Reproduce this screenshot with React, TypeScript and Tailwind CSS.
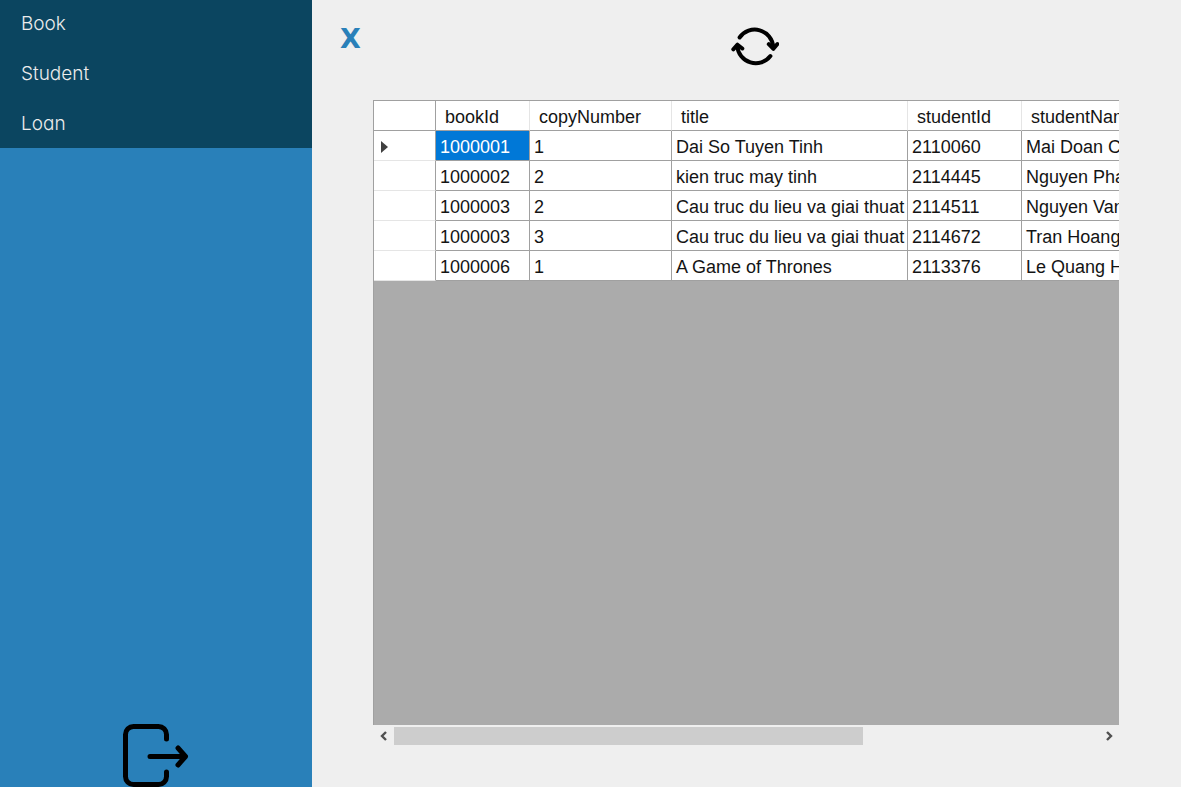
import React from 'react';

type Loan = {
  bookId: string;
  copyNumber: string;
  title: string;
  studentId: string;
  studentName: string;
};

const loans: Loan[] = [
  { bookId: '1000001', copyNumber: '1', title: 'Dai So Tuyen Tinh', studentId: '2110060', studentName: 'Mai Doan Ch' },
  { bookId: '1000002', copyNumber: '2', title: 'kien truc may tinh', studentId: '2114445', studentName: 'Nguyen Pha' },
  { bookId: '1000003', copyNumber: '2', title: 'Cau truc du lieu va giai thuat', studentId: '2114511', studentName: 'Nguyen Van' },
  { bookId: '1000003', copyNumber: '3', title: 'Cau truc du lieu va giai thuat', studentId: '2114672', studentName: 'Tran Hoang' },
  { bookId: '1000006', copyNumber: '1', title: 'A Game of Thrones', studentId: '2113376', studentName: 'Le Quang H' },
];

const columns: (keyof Loan)[] = ['bookId', 'copyNumber', 'title', 'studentId', 'studentName'];

function Sidebar() {
  return (
    <aside className="flex w-[312px] shrink-0 flex-col justify-between bg-[#2980b9]">
      <nav className="flex flex-col gap-0.5 bg-[#0b4560]">
        {['Book', 'Student', 'Loan'].map((item) => (
          <button
            key={item}
            type="button"
            className="h-12 px-[21px] text-left font-['Inter',sans-serif] text-[19px] leading-6 font-light text-[#ececec] [font-feature-settings:'cv11']"
          >
            {item}
          </button>
        ))}
      </nav>
      <button type="button" aria-label="Log out" className="self-center">
        <svg
          width="68"
          height="64"
          viewBox="0 0 68 64"
          fill="none"
          stroke="#000"
          strokeWidth="5"
          strokeLinecap="round"
          strokeLinejoin="round"
          className="block"
        >
          <path d="M44.500 16V11.500a8 8 0 0 0-8-8h-25a8 8 0 0 0-8 8v42a8 8 0 0 0 8 8h25a8 8 0 0 0 8-8V49" />
          <path d="M28 33.500H63M56 25l7.500 8.500L56 42" />
        </svg>
      </button>
    </aside>
  );
}

function LoanTable() {
  return (
    <table className="w-[848px] table-fixed border-separate border-spacing-0 bg-white text-left text-[18px] leading-5 text-[#141414]">
      <colgroup>
        <col className="w-[62px]" />
        <col className="w-[94px]" />
        <col className="w-[142px]" />
        <col className="w-[236px]" />
        <col className="w-[114px]" />
        <col className="w-[200px]" />
      </colgroup>
      <thead>
        <tr className="h-[30px]">
          <td className="border-r border-b border-[#a0a0a0]" />
          {columns.map((column) => (
            <th
              key={column}
              scope="col"
              className="border-r border-b border-r-[#e5e5e5] border-b-[#a0a0a0] p-0 pt-0.5 pl-[9px] font-normal whitespace-nowrap"
            >
              {column}
            </th>
          ))}
        </tr>
      </thead>
      <tbody>
        {loans.map((loan, row) => (
          <tr key={row} className="h-[30px]">
            <td className="border-r border-b border-r-[#a0a0a0] border-b-[#e5e5e5] p-0 pt-0.5 pl-[7px]">
              {row === 0 && (
                <svg width="7" height="12" viewBox="0 0 7 12" className="block">
                  <path d="M0 0l7 6-7 6z" fill="#404040" />
                </svg>
              )}
            </td>
            {columns.map((column) => (
              <td
                key={column}
                className={
                  row === 0 && column === 'bookId'
                    ? 'border-r border-b border-[#a0a0a0] bg-[#0078d7] p-0 pt-0.5 pl-1 whitespace-nowrap text-white'
                    : 'border-r border-b border-[#a0a0a0] p-0 pt-0.5 pl-1 whitespace-nowrap'
                }
              >
                {loan[column]}
              </td>
            ))}
          </tr>
        ))}
      </tbody>
    </table>
  );
}

function Scrollbar() {
  return (
    <div className="flex h-5 items-center pt-px">
      <button type="button" aria-label="Scroll left" className="flex w-[21px] justify-center">
        <svg width="8" height="10" viewBox="0 0 8 10" fill="none" stroke="#505050" strokeWidth="2.400">
          <path d="M6 1L2 5l4 4" />
        </svg>
      </button>
      <div className="flex flex-1">
        <div className="h-[18px] w-2/3 bg-[#cdcdcd]" />
      </div>
      <button type="button" aria-label="Scroll right" className="flex w-[21px] justify-center">
        <svg width="8" height="10" viewBox="0 0 8 10" fill="none" stroke="#505050" strokeWidth="2.400">
          <path d="M2 1l4 4-4 4" />
        </svg>
      </button>
    </div>
  );
}

export default function App() {
  return (
    <div className="flex h-screen bg-[#efefef] font-['Liberation_Sans',Arial,sans-serif]">
      <Sidebar />
      <main className="flex min-w-0 flex-1 flex-col pb-[42px]">
        <header className="grid h-[100px] shrink-0 grid-cols-[1fr_auto_1fr] items-start px-7 pt-6">
          <button
            type="button"
            className="justify-self-start font-['DejaVu_Sans',sans-serif] text-[27px] leading-[30px] font-bold text-[#2980b9]"
          >
            X
          </button>
          <button type="button" aria-label="Refresh" className="ml-4 pt-0.5">
            <svg
              width="48"
              height="42"
              viewBox="0 0 48 42"
              fill="none"
              stroke="#000"
              strokeWidth="4"
              strokeLinecap="round"
              strokeLinejoin="round"
              className="block"
            >
              <path d="M8.600 11.500A18.500 18.500 0 0 1 42.200 21" />
              <path d="M37.800 18.200l4.600 4.600 4-4.800" />
              <path d="M39.400 30A18.500 18.500 0 0 1 6.300 20" />
              <path d="M2.300 23.300l4.200-4.600 4.800 3.800" />
            </svg>
          </button>
        </header>
        <section className="mr-[62px] ml-[61px] flex min-h-0 flex-1 flex-col">
          <div className="min-h-0 flex-1 overflow-hidden border-t border-l border-[#a0a0a0] bg-[#ababab]">
            <LoanTable />
          </div>
          <Scrollbar />
        </section>
      </main>
    </div>
  );
}
